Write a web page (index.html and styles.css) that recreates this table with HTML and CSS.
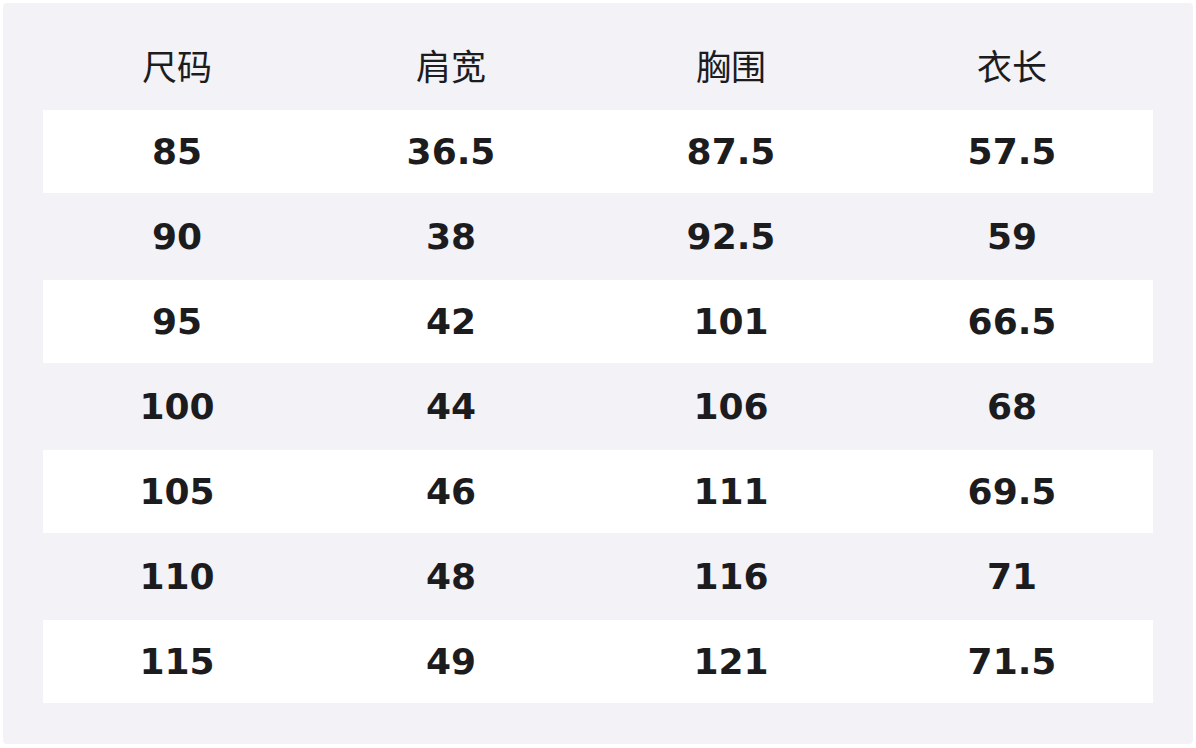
FILE: index.html
```html
<!DOCTYPE html>
<html lang="zh">
<head>
<meta charset="utf-8">
<link rel="stylesheet" href="styles.css">
</head>
<body>
<div class="panel">
  <table class="size-table">
    <colgroup>
      <col class="c1"><col class="c2"><col class="c3"><col class="c4">
    </colgroup>
    <thead>
      <tr><th>尺码</th><th>肩宽</th><th>胸围</th><th>衣长</th></tr>
    </thead>
    <tbody>
      <tr class="odd"><td>85</td><td>36.5</td><td>87.5</td><td>57.5</td></tr>
      <tr><td>90</td><td>38</td><td>92.5</td><td>59</td></tr>
      <tr class="odd"><td>95</td><td>42</td><td>101</td><td>66.5</td></tr>
      <tr><td>100</td><td>44</td><td>106</td><td>68</td></tr>
      <tr class="odd"><td>105</td><td>46</td><td>111</td><td>69.5</td></tr>
      <tr><td>110</td><td>48</td><td>116</td><td>71</td></tr>
      <tr class="odd"><td>115</td><td>49</td><td>121</td><td>71.5</td></tr>
    </tbody>
  </table>
</div>
</body>
</html>
```
FILE: styles.css
```css
html, body {
  margin: 0;
  padding: 0;
  background: #ffffff;
}
body {
  padding: 3px;
  width: 1196px;
  height: 748px;
  box-sizing: border-box;
}
.panel {
  background: #f2f2f7;
  border-radius: 4px;
  width: 1190px;
  height: 741px;
  box-sizing: border-box;
  padding: 20px 40px 0 40px;
}
.size-table {
  width: 1110px;
  border-collapse: separate;
  border-spacing: 0 2px;
  table-layout: fixed;
}
.c1 { width: 268px; }
.c2 { width: 280px; }
.c3 { width: 280px; }
.c4 { width: 282px; }
.size-table th,
.size-table td {
  height: 83px;
  padding: 0;
  text-align: center;
  vertical-align: middle;
  color: #1c1c1e;
}
.size-table th {
  font-family: "Noto Sans CJK SC", "Noto Sans", sans-serif;
  font-weight: 400;
  font-size: 35px;
  padding-bottom: 4px;
  box-sizing: border-box;
}
.size-table td {
  font-family: "DejaVu Sans", sans-serif;
  font-weight: 700;
  font-size: 36px;
}
.size-table tr.odd td {
  background: #ffffff;
}
```
